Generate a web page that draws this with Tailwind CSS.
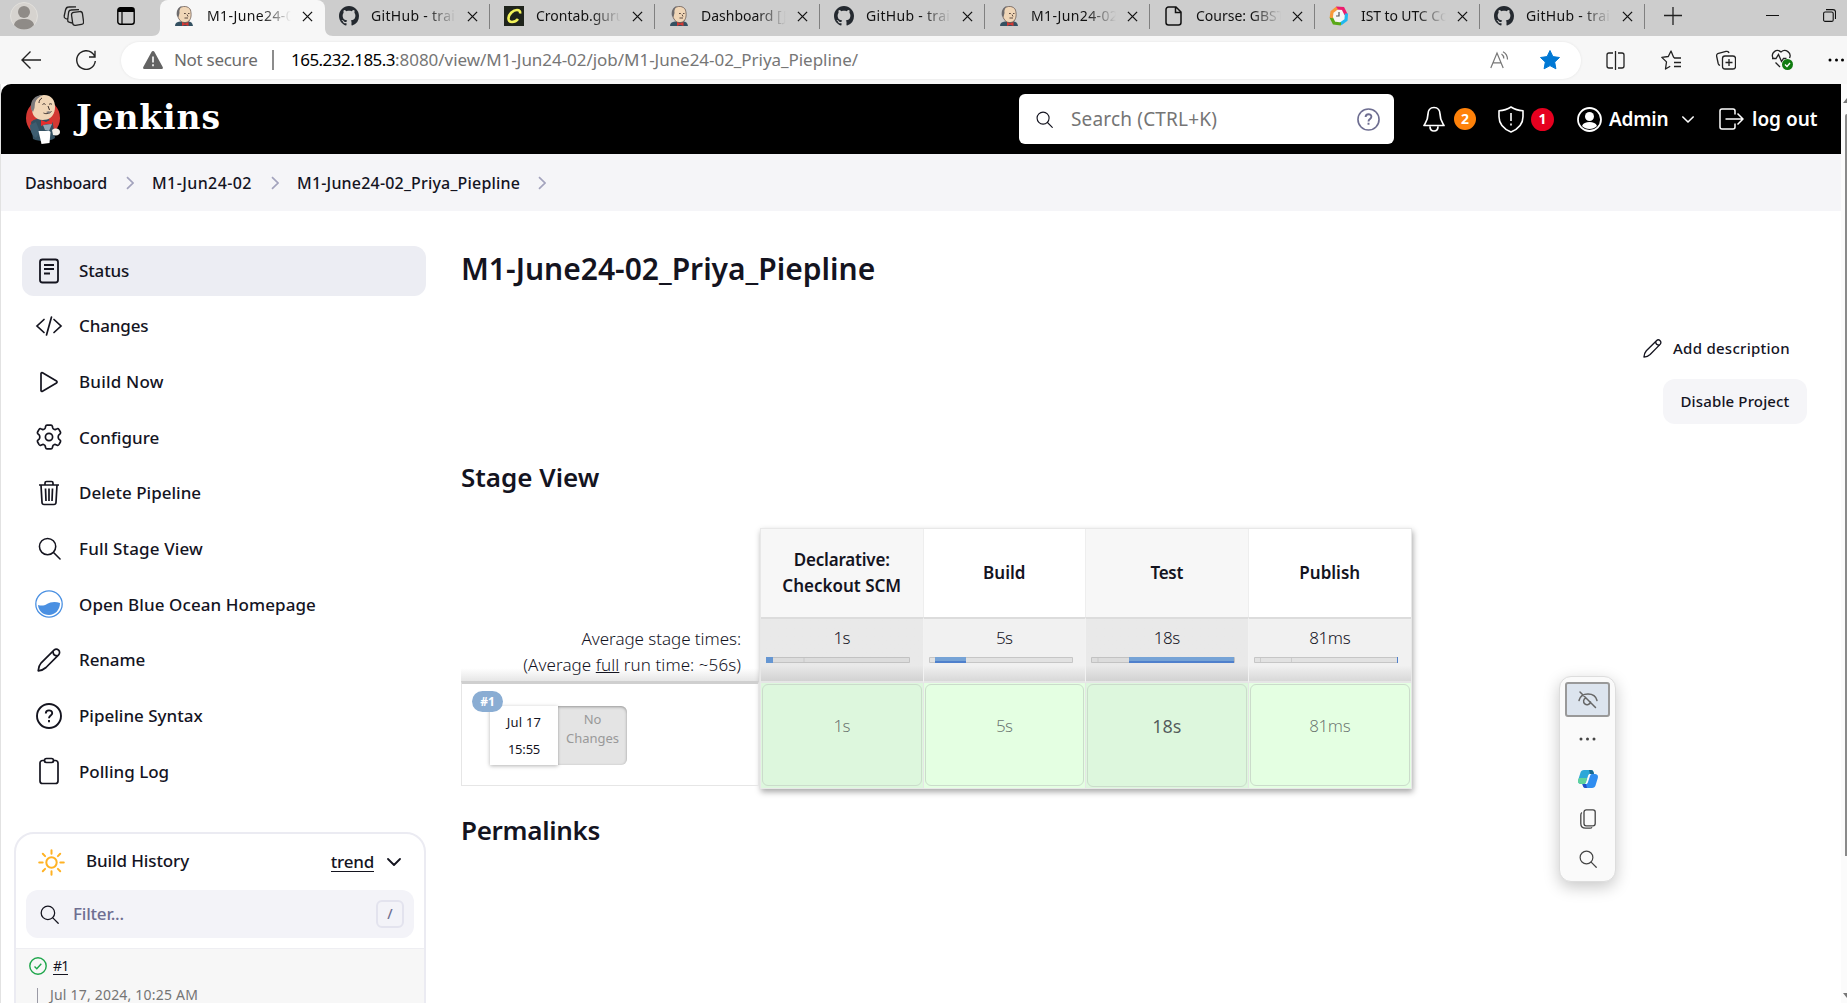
<!DOCTYPE html>
<html lang="en">
<head>
<meta charset="utf-8">
<title>M1-June24-02_Priya_Piepline [Jenkins]</title>
<script src="https://cdn.jsdelivr.net/npm/@tailwindcss/browser@4"></script>
</head>
<body class="w-[1847px] h-[1003px] overflow-hidden bg-white font-['Noto_Sans','Open_Sans',sans-serif] text-[#14141f]">

<svg class="hidden">
  <symbol id="butler" viewBox="0 0 20 20">
    <path d="M1 20c0-3 2-4 5-4.500l8-.2c3 .4 4.500 1.500 5 4.700z" fill="#335061"/>
    <path d="M5 13c-2-3-2-7 0-10C8-1 15 0 16.500 4c1 4 1 8-1.500 11-2 2-6 2-8 .5z" fill="#f0d6b7" stroke="#5b4a44" stroke-width=".7"/>
    <path d="M3 10c-1-4 .5-9 5-10-2 2-3 4-2.500 7l-1 4z" fill="#6d6b6d"/>
    <path d="M10 7.500h1.800M14 7.500h1.500M10.500 12h3.500M13 8.500l1 2" stroke="#4d3b33" stroke-width=".9" fill="none"/>
    <path d="M8 16l3 1.500 3.500-1.500v4l-3.500-1.200L8 20z" fill="#d33833"/>
  </symbol>
  <symbol id="github" viewBox="0 0 16 16"><path fill="#24292f" d="M8 0C3.580 0 0 3.580 0 8c0 3.540 2.290 6.530 5.470 7.590.4.070.550-.170.550-.380 0-.190-.010-.820-.010-1.490-2.010.370-2.530-.490-2.690-.940-.090-.230-.480-.940-.820-1.130-.280-.150-.680-.520-.010-.530.630-.010 1.080.580 1.230.820.720 1.210 1.870.870 2.330.660.070-.520.280-.870.510-1.070-1.780-.2-3.640-.890-3.640-3.950 0-.870.310-1.590.820-2.150-.080-.2-.360-1.020.080-2.120 0 0 .670-.210 2.200.820.640-.180 1.320-.270 2-.270s1.360.090 2 .270c1.530-1.040 2.200-.820 2.200-.820.440 1.100.160 1.920.080 2.120.510.560.820 1.270.820 2.150 0 3.070-1.870 3.750-3.650 3.950.290.250.540.730.540 1.480 0 1.070-.010 1.930-.010 2.200 0 .210.150.460.550.380A8.010 8.010 0 0 0 16 8c0-4.420-3.580-8-8-8z"/></symbol>
  <symbol id="close" viewBox="0 0 12 12"><path d="M1 1l10 10M11 1L1 11" stroke="#111" stroke-width="1.400" fill="none"/></symbol>
  <symbol id="search" viewBox="0 0 24 24"><g fill="none" stroke="currentColor" stroke-width="1.600" stroke-linecap="round"><circle cx="10" cy="10" r="8.500"/><path d="M16.200 16.200L23 23"/></g></symbol>
  <symbol id="pencil" viewBox="0 0 24 24"><g fill="none" stroke="currentColor" stroke-width="1.700" stroke-linejoin="round"><path d="M1.200 22.800c.3-3.500 1-5.800 3-8L17 2.200c1.300-1.300 3.300-1.300 4.600 0s1.300 3.300 0 4.600L9 19.500c-2.200 2-4.300 3-7.800 3.300z"/><path d="M16 3.200c0 3 1.700 4.700 4.700 4.700"/></g></symbol>
  <symbol id="chev" viewBox="0 0 8 14"><path d="M1 1.200L7 7l-6 5.800" fill="none" stroke="#a3a3bd" stroke-width="1.700"/></symbol>
  <symbol id="down" viewBox="0 0 14 8"><path d="M1 1l6 6 6-6" fill="none" stroke="currentColor" stroke-width="1.800" stroke-linecap="round" stroke-linejoin="round"/></symbol>
</svg>

<!-- Tab strip -->
<div class="flex h-9 bg-[#cdcdcd]">
  <div class="flex w-40 shrink-0 pl-[10px] pt-[2px]">
    <svg class="size-[28px]" viewBox="0 0 28 28"><circle cx="14" cy="14" r="13.500" fill="#d6d3cf" stroke="#e2e0dc"/><circle cx="14" cy="10" r="6" fill="#8f8b87"/><path d="M4 23c1-5 5-6 10-6s9 1 10 6c-5 6-15 6-20 0z" fill="#8f8b87"/></svg>
    <svg class="ml-[25px] mt-[4px] h-[20px] w-[21px]" viewBox="0 0 21 20" fill="none" stroke="#222" stroke-width="1.300"><rect x="9" y="6" width="11" height="13" rx="2.500" transform="rotate(-8 14 12)"/><path d="M9 17l-3-.8C5 16 4.600 15 4.700 14l.8-7c.2-2 1-3 2.500-3l8-.3M5 13.500l-2.500-1C1.300 12 1 11 1.200 10l1.300-6C3 2 4 1 5.500 1L13 .8"/></svg>
    <svg class="ml-[33px] mt-[5px] size-[18px]" viewBox="0 0 18 18"><rect x=".8" y=".8" width="16.400" height="16.400" rx="2.500" fill="none" stroke="#000" stroke-width="1.400"/><path d="M1 1h16v4H1z" fill="#000"/><path d="M5 5v12" stroke="#000" stroke-width="1.200"/></svg>
  </div>
  <div class="relative z-10 flex w-[165px] shrink-0 items-center rounded-t-lg bg-[#f7f7f7] pb-1 pl-[14px] text-sm">
    <svg class="absolute -left-2 bottom-0 size-2" viewBox="0 0 8 8"><path d="M8 0v8H0c5 0 8-3 8-8z" fill="#f7f7f7"/></svg>
    <svg class="absolute -right-2 bottom-0 size-2" viewBox="0 0 8 8"><path d="M0 0v8h8C3 8 0 5 0 0z" fill="#f7f7f7"/></svg>
    <svg class="size-5"><use href="#butler"/></svg>
    <div class="ml-[13px] w-[84px] overflow-hidden whitespace-nowrap bg-linear-to-r from-[#111] from-65% to-transparent bg-clip-text tracking-[0.4px] text-transparent">M1-June24-02</div>
    <svg class="ml-[11px] size-[11px]"><use href="#close"/></svg>
  </div>
  <div class="relative flex h-8 w-[165px] shrink-0 items-center pl-[14px] text-sm">
    <svg class="size-5"><use href="#github"/></svg>
    <div class="ml-[12px] w-[85px] overflow-hidden whitespace-nowrap bg-linear-to-r from-[#111] from-65% to-transparent bg-clip-text tracking-[0.3px] text-transparent">GitHub - train</div>
    <svg class="ml-[11px] size-[11px]"><use href="#close"/></svg>
    <div class="absolute right-0 top-1 h-[25px] w-px bg-[#808080]"></div>
  </div>
  <div class="relative flex h-8 w-[165px] shrink-0 items-center pl-[14px] text-sm">
    <svg class="size-5" viewBox="0 0 20 20"><path d="M0 0h20v20H0z" fill="#1f241c"/><path d="M16 7.500c.5-2-.5-3.500-3-3.500-4 0-8 4-8.500 8-.2 2.500 1 4 3.500 4 2.300 0 4.500-1 6-3" fill="none" stroke="#f2f35a" stroke-width="2.600"/></svg>
    <div class="ml-[12px] w-[85px] overflow-hidden whitespace-nowrap bg-linear-to-r from-[#111] from-65% to-transparent bg-clip-text text-transparent">Crontab.guru</div>
    <svg class="ml-[11px] size-[11px]"><use href="#close"/></svg>
    <div class="absolute right-0 top-1 h-[25px] w-px bg-[#808080]"></div>
  </div>
  <div class="relative flex h-8 w-[165px] shrink-0 items-center pl-[14px] text-sm">
    <svg class="size-5"><use href="#butler"/></svg>
    <div class="ml-[12px] w-[85px] overflow-hidden whitespace-nowrap bg-linear-to-r from-[#111] from-65% to-transparent bg-clip-text text-transparent">Dashboard [J</div>
    <svg class="ml-[11px] size-[11px]"><use href="#close"/></svg>
    <div class="absolute right-0 top-1 h-[25px] w-px bg-[#808080]"></div>
  </div>
  <div class="relative flex h-8 w-[165px] shrink-0 items-center pl-[14px] text-sm">
    <svg class="size-5"><use href="#github"/></svg>
    <div class="ml-[12px] w-[85px] overflow-hidden whitespace-nowrap bg-linear-to-r from-[#111] from-65% to-transparent bg-clip-text tracking-[0.3px] text-transparent">GitHub - train</div>
    <svg class="ml-[11px] size-[11px]"><use href="#close"/></svg>
    <div class="absolute right-0 top-1 h-[25px] w-px bg-[#808080]"></div>
  </div>
  <div class="relative flex h-8 w-[165px] shrink-0 items-center pl-[14px] text-sm">
    <svg class="size-5"><use href="#butler"/></svg>
    <div class="ml-[12px] w-[85px] overflow-hidden whitespace-nowrap bg-linear-to-r from-[#111] from-65% to-transparent bg-clip-text tracking-[0.4px] text-transparent">M1-Jun24-02</div>
    <svg class="ml-[11px] size-[11px]"><use href="#close"/></svg>
    <div class="absolute right-0 top-1 h-[25px] w-px bg-[#808080]"></div>
  </div>
  <div class="relative flex h-8 w-[165px] shrink-0 items-center pl-[14px] text-sm">
    <svg class="size-5" viewBox="0 0 20 20" fill="none" stroke="#111" stroke-width="1.500"><path d="M4.500 1H12l5 5v10.500a2.500 2.500 0 0 1-2.500 2.500h-10A2.500 2.500 0 0 1 2 16.500v-13A2.500 2.500 0 0 1 4.500 1zM11.500 1v5.500H17"/></svg>
    <div class="ml-[12px] w-[85px] overflow-hidden whitespace-nowrap bg-linear-to-r from-[#111] from-65% to-transparent bg-clip-text text-transparent">Course: GBST</div>
    <svg class="ml-[11px] size-[11px]"><use href="#close"/></svg>
    <div class="absolute right-0 top-1 h-[25px] w-px bg-[#808080]"></div>
  </div>
  <div class="relative flex h-8 w-[165px] shrink-0 items-center pl-[14px] text-sm">
    <svg class="size-5" viewBox="0 0 20 20"><circle cx="10" cy="10" r="8" fill="#f6f6f4"/><g fill="none" stroke-width="3.200"><path d="M7 2l7 .5 3 6" stroke="#ec1c6e"/><path d="M17.500 7.500L17 14l-5.500 4" stroke="#1fb8f0"/><path d="M12 18l-7-1-3-6" stroke="#5aa818"/><path d="M2.200 12L3 6l5-4" stroke="#f79a3a"/></g><path d="M10 6v4H7" fill="none" stroke="#555" stroke-width="1.200"/></svg>
    <div class="ml-[12px] w-[85px] overflow-hidden whitespace-nowrap bg-linear-to-r from-[#111] from-65% to-transparent bg-clip-text tracking-[-0.1px] text-transparent">IST to UTC Co</div>
    <svg class="ml-[11px] size-[11px]"><use href="#close"/></svg>
    <div class="absolute right-0 top-1 h-[25px] w-px bg-[#808080]"></div>
  </div>
  <div class="relative flex h-8 w-[165px] shrink-0 items-center pl-[14px] text-sm">
    <svg class="size-5"><use href="#github"/></svg>
    <div class="ml-[12px] w-[85px] overflow-hidden whitespace-nowrap bg-linear-to-r from-[#111] from-65% to-transparent bg-clip-text tracking-[0.3px] text-transparent">GitHub - train</div>
    <svg class="ml-[11px] size-[11px]"><use href="#close"/></svg>
    <div class="absolute right-0 top-1 h-[25px] w-px bg-[#808080]"></div>
  </div>
  <svg class="ml-[19px] mt-[7px] size-[18px] shrink-0" viewBox="0 0 18 18"><path d="M9 0v18M0 8.500h18" stroke="#222" stroke-width="1.300"/></svg>
  <svg class="ml-[84px] mt-[9px] size-[13px] shrink-0" viewBox="0 0 13 13"><path d="M0 6.500h13" stroke="#111"/></svg>
  <svg class="ml-[44px] mt-[9px] size-[13px] shrink-0" viewBox="0 0 13 13" fill="none" stroke="#111" stroke-width="1.100"><rect x=".6" y="3" width="9.600" height="9.400" rx="1.500"/><path d="M3 .6h7a2.500 2.500 0 0 1 2.500 2.500v7"/></svg>
</div>

<!-- Address bar -->
<div class="flex h-12 items-center bg-[#f7f7f7] pl-[21px] text-[17px]">
  <svg class="h-[18px] w-5 shrink-0" viewBox="0 0 20 18" fill="none" stroke="#222" stroke-width="1.400"><path d="M20 9H1M9.500.5L1 9l8.500 8.500"/></svg>
  <svg class="ml-[35px] size-5 shrink-0" viewBox="0 0 20 20" fill="none" stroke="#222" stroke-width="1.400"><path d="M19 7.500A9.300 9.300 0 1 0 19.300 11M19 .8V7h-6"/></svg>
  <div class="ml-[25px] flex h-[37px] w-[1460px] shrink-0 items-center whitespace-nowrap rounded-full bg-white pl-[22px] shadow-[0_0_3px_rgba(0,0,0,0.08)]">
    <svg class="h-[18px] w-5" viewBox="0 0 20 18"><path d="M10 0c.7 0 1.200.4 1.500 1l8.200 15c.6 1-.1 2-1.200 2h-17C.4 18-.3 17 .3 16L8.500 1c.3-.6.8-1 1.500-1z" fill="#636363"/><path d="M10 5.500v6M10 13.300v2" stroke="#fff" stroke-width="1.600"/></svg>
    <span class="ml-[11px] w-[84px] tracking-[-0.3px] text-[#6b6b6b]">Not secure</span>
    <div class="ml-[14px] h-5 w-[2px] bg-[#8c8c8c]"></div>
    <span class="ml-[17px] w-[104px] tracking-[-0.53px] text-black">165.232.185.3</span><span class="tracking-[-0.04px] text-[#767676]">:8080/view/M1-Jun24-02/job/M1-June24-02_Priya_Piepline/</span>
    <svg class="ml-auto h-[18px] w-5" viewBox="0 0 20 18" fill="none" stroke="#777" stroke-width="1.200"><path d="M.8 17L7 2l6.200 15M3 11.800h8M11.500 3c1.600 1 2.300 2.500 2.300 4.500M13 .7c3 1.600 4.500 4.300 4.500 7.800"/></svg>
    <svg class="ml-[30px] mr-[21px] size-5" viewBox="0 0 20 20"><path d="M10 .5l2.900 6.100 6.600.9-4.800 4.600 1.200 6.700L10 15.600l-5.900 3.200 1.200-6.700L.5 7.500l6.600-.9z" fill="#0078d4" stroke="#0078d4" stroke-linejoin="round"/></svg>
  </div>
  <svg class="ml-[25px] size-[19px] shrink-0" viewBox="0 0 19 19" fill="none" stroke="#222" stroke-width="1.300"><path d="M9.500 0v19M7 2H3a2 2 0 0 0-2 2v11a2 2 0 0 0 2 2h4M12 2h4a2 2 0 0 1 2 2v11a2 2 0 0 1-2 2h-4"/></svg>
  <svg class="ml-[36px] size-5 shrink-0" viewBox="0 0 20 20" fill="none" stroke="#222" stroke-width="1.300" stroke-linejoin="round"><path d="M20 8h-6.500l-1-1L10 1 7.300 6.500.8 7.400l4.700 4.500L4.500 19l4.700-2.800M13 12.500h7M13 16.500h7"/></svg>
  <svg class="ml-[35px] size-5 shrink-0" viewBox="0 0 20 20" fill="none" stroke="#222" stroke-width="1.300"><rect x="6.500" y="6" width="13" height="13" rx="2.500"/><path d="M13 9v7M9.500 12.500h7M4 15.500C3 15 2.500 14.500 2.200 13.500l-1.500-7C.3 5 1 3.800 2.500 3.400l7.500-2c1.500-.4 2.700.3 3 1.600"/></svg>
  <svg class="ml-[35px] size-[22px] shrink-0" viewBox="0 0 22 22" fill="none" stroke="#222" stroke-width="1.300"><path d="M9 18L4.500 13.500M2 9C-.5 4 5.500-1 10 3c4.500-4 11 1 8.500 6M1 9.500h4l2.500-4 3 7 2-3h3"/><circle cx="16.500" cy="15.500" r="5.500" fill="#107c10" stroke="none"/><path d="M14 15.500l2 2 3-3.500" stroke="#fff"/></svg>
  <svg class="ml-[35px] h-1 w-[17px] shrink-0" viewBox="0 0 17 4"><circle cx="2" cy="2" r="1.500"/><circle cx="8.500" cy="2" r="1.500"/><circle cx="14.500" cy="2" r="1.500"/></svg>
</div>

<!-- Page -->
<div class="flex h-[919px]">
<div class="w-[1841px] shrink-0 border-l border-[#e2e2e2]">
  <header class="flex h-[70px] items-center rounded-tl-[10px] bg-black pl-6 text-white">
    <svg class="h-[50px] w-[36px] shrink-0" viewBox="0 0 36 50"><ellipse cx="18" cy="24" rx="17" ry="18" fill="#d33833"/><path d="M6 28c3-3 8-4 12-4s9 2 10 6l2 14c-6 4-15 4-22 1z" fill="#335061"/><path d="M5 31l6-3 4 10-4 6c-4-2-6-7-6-13z" fill="#3d5d70"/><path d="M9 22C4 14 7 1 19 1c8 0 11 6 11 12s-3 11-8 12.500c-5 1-10 .5-13-3.500z" fill="#f0d6b7"/><path d="M6 15C5 6 10 1 18 1c-4 2-7 4-8 8l-.5 5L8 18z" fill="#7d7b7c"/><path d="M14 9c0-2 1-4 3-5M17.500 10.500c1-1 2.300-1 3 0M24 10.500c1-1 2-1 3 0M23 12l1.500 4M18.500 19c3 1.500 6 0 8-1.500" stroke="#3a2e2a" stroke-width="1" fill="none"/><path d="M21 18c2-1 3-1 5 0l-2 2z" fill="#7d7b7c"/><path d="M16 26l5 2 6-3v6l-5-1-6 2z" fill="#e52d2d"/><path d="M18 31l9-1-3 7-4-1z" fill="#8fa5b4"/><path d="M13.500 37h11l1 1-1 11-8 1z" fill="#fff"/><path d="M27 36c4-3 8-1 8 2s-3 4-7 3z" fill="#f3efe9"/></svg>
    <span class="ml-[15px] mt-[-4px] font-['DejaVu_Serif',serif] text-[33px] leading-none font-bold tracking-[0.9px]">Jenkins</span>
    <div class="ml-auto mr-[29px] flex h-[50px] w-[375px] items-center rounded-md bg-white pl-[17px] text-[19px] text-[#757575]">
      <svg class="size-[17px] text-[#14141f]"><use href="#search"/></svg>
      <span class="ml-[18px] tracking-[0.17px]">Search (CTRL+K)</span>
      <svg class="ml-auto mr-[14px] size-[23px]" viewBox="0 0 24 24" fill="none" stroke="#6e6e91" stroke-width="1.700"><circle cx="12" cy="12" r="11"/><path d="M9 9.500c0-4 6-4 6-.3 0 2.300-3 2.300-3 4.800M12 15.500v2" stroke-width="2"/></svg>
    </div>
    <div class="flex h-full items-center whitespace-nowrap text-[19px] font-semibold">
      <svg class="h-[26px] w-[22px]" viewBox="0 0 22 26" fill="none" stroke="#fff" stroke-width="1.700" stroke-linejoin="round"><path d="M11 1.500c-4 0-6 3-6 6.500 0 6-1.500 7.500-4 11.500h20c-2.500-4-4-5.500-4-11.500 0-3.500-2-6.500-6-6.500zM7 20.500c0 6 8 6 8 0"/></svg>
      <div class="ml-[9px] flex size-[22px] items-center justify-center rounded-full bg-[#ff820a] text-sm font-bold">2</div>
      <svg class="ml-[22px] h-[27px] w-[26px]" viewBox="0 0 26 27" fill="none" stroke="#fff" stroke-width="1.600" stroke-linejoin="round"><path d="M13 1c3.500 2.300 7.500 3.500 12 3.700v6C25 18 20 23 13 26 6 23 1 18 1 10.700v-6C5.500 4.500 9.500 3.300 13 1zM13 7v8M13 17.500v2"/></svg>
      <div class="ml-[7px] flex size-[23px] items-center justify-center rounded-full bg-[#e6001f] text-sm font-bold">1</div>
      <svg class="ml-[23px] size-[25px]" viewBox="0 0 25 25"><circle cx="12.500" cy="12.500" r="11.500" fill="none" stroke="#fff" stroke-width="1.800"/><circle cx="12.500" cy="9.500" r="4.500" fill="#fff"/><path d="M5 19c1-3 4-4 7.500-4s6.500 1 7.500 4c-4 4-11 4-15 0z" fill="#fff"/></svg>
      <span class="ml-[7px] w-[59px] tracking-[-0.2px]">Admin</span>
      <svg class="ml-[14px] h-[7px] w-[12px]"><use href="#down"/></svg>
      <svg class="ml-[25px] h-[22px] w-[25px]" viewBox="0 0 25 22" fill="none" stroke="#fff" stroke-width="1.500" stroke-linejoin="round"><path d="M16 6.500V3a2 2 0 0 0-2-2H3a2 2 0 0 0-2 2v16a2 2 0 0 0 2 2h11a2 2 0 0 0 2-2v-3.500M6.500 11H24M18.500 5.500L24 11l-5.500 5.500"/></svg>
      <span class="ml-[8px] mr-6 w-[65px]">log out</span>
    </div>
  </header>

  <nav class="flex h-[57px] items-center whitespace-nowrap bg-[#f5f5f8] pl-6 text-base font-medium">
    <span class="w-[82px] tracking-[-0.2px]">Dashboard</span>
    <svg class="ml-[19px] h-[14px] w-2"><use href="#chev"/></svg>
    <span class="ml-[18px] w-[100px] tracking-[0.4px]">M1-Jun24-02</span>
    <svg class="ml-[19px] h-[14px] w-2"><use href="#chev"/></svg>
    <span class="ml-[18px] w-[223px] tracking-[0.19px]">M1-June24-02_Priya_Piepline</span>
    <svg class="ml-[18px] h-[14px] w-2"><use href="#chev"/></svg>
  </nav>

  <div class="flex">
    <!-- Sidebar -->
    <aside class="ml-[13px] w-[412px] shrink-0 pt-[35px]">
      <div class="ml-2 flex h-[551px] w-[404px] flex-col justify-between text-[17px] font-medium">
        <div class="flex h-[50px] items-center gap-[15px] rounded-xl bg-[#ecedf3] pb-px pl-[12px]">
          <svg class="size-[30px]" viewBox="0 0 30 30" fill="none" stroke="currentColor" stroke-width="1.800"><rect x="6" y="3.500" width="18" height="23" rx="2.500"/><path d="M10 9h10M10 13h10M10 17.500h6"/></svg><span class="tracking-[-0.15px]">Status</span></div>
        <div class="flex h-[50px] items-center gap-[15px] pb-px pl-[12px]">
          <svg class="size-[30px]" viewBox="0 0 30 30" fill="none" stroke="currentColor" stroke-width="1.700" stroke-linecap="round"><path d="M10 8.500L3 15l7 6.500M20 8.500l7 6.500-7 6.500M17.500 6l-5 18"/></svg><span class="tracking-[-0.15px]">Changes</span></div>
        <div class="flex h-[50px] items-center gap-[15px] pb-px pl-[12px]">
          <svg class="size-[30px]" viewBox="0 0 30 30" fill="none" stroke="currentColor" stroke-width="1.700" stroke-linejoin="round"><path d="M7 6.500v17c0 .8.800 1.200 1.500.8l14-8.400c.7-.4.7-1.400 0-1.800l-14-8.400C7.800 5.300 7 5.700 7 6.500z"/></svg><span class="tracking-[0.2px]">Build Now</span></div>
        <div class="flex h-[50px] items-center gap-[15px] pb-px pl-[12px]">
          <svg class="size-[30px]" viewBox="0 0 30 30" fill="none" stroke="currentColor" stroke-width="1.700" stroke-linejoin="round"><circle cx="15" cy="15" r="3.600"/><path d="M13 3.200h4c.8 0 1.200.4 1.400 1.200l.4 1.600c.2.700.5 1 1.200 1.300.6.300 1 .4 1.600.1l1.600-.6c.7-.3 1.300 0 1.700.6l1.500 2.600c.4.700.3 1.300-.3 1.800l-1.200 1.100c-.5.500-.7 1-.7 2.100s.2 1.600.7 2.100l1.200 1.100c.6.500.7 1.100.3 1.800l-1.500 2.600c-.4.600-1 .9-1.700.6l-1.600-.6c-.6-.3-1-.2-1.600.1-.7.3-1 .6-1.200 1.300l-.4 1.600c-.2.800-.6 1.200-1.400 1.200h-4c-.8 0-1.200-.4-1.400-1.200l-.4-1.600c-.2-.7-.5-1-1.200-1.300-.6-.3-1-.4-1.600-.1l-1.600.6c-.7.3-1.300 0-1.700-.6L3.600 20c-.4-.7-.3-1.300.3-1.800l1.200-1.100c.5-.5.7-1 .7-2.100s-.2-1.600-.7-2.100l-1.200-1.100c-.6-.5-.7-1.100-.3-1.800l1.500-2.600c.4-.6 1-.9 1.700-.6l1.600.6c.6.300 1 .2 1.600-.1.7-.3 1-.6 1.200-1.300l.4-1.600c.2-.8.6-1.200 1.400-1.200z"/></svg><span>Configure</span></div>
        <div class="flex h-[50px] items-center gap-[15px] pb-px pl-[12px]">
          <svg class="size-[30px]" viewBox="0 0 30 30" fill="none" stroke="currentColor" stroke-width="1.700"><path d="M5 7h20M11 7V5c0-1 .5-1.500 1.500-1.500h5c1 0 1.500.5 1.500 1.500v2M7 7l1 17.500c.1 1 .9 2 2 2h10c1.100 0 1.900-1 2-2L23 7M11.500 10.500l.5 12.500M15 10.500V23M18.500 10.500L18 23"/></svg><span>Delete Pipeline</span></div>
        <div class="flex h-[50px] items-center gap-[15px] pb-px pl-[12px]">
          <span class="flex size-[30px] items-center justify-center"><svg class="size-[23px]"><use href="#search"/></svg></span><span class="tracking-[0.15px]">Full Stage View</span></div>
        <div class="flex h-[50px] items-center gap-[15px] pb-px pl-[12px]">
          <svg class="size-[30px]" viewBox="0 0 30 30"><circle cx="15" cy="15" r="13.200" fill="none" stroke="#4a90e2" stroke-width="1.300"/><path d="M4 16c3 .8 6 1 9-1s8-3 13-1c0 7-5 12-11 12S4.500 22 4 16z" fill="#4a90e2"/></svg><span class="tracking-[0.08px]">Open Blue Ocean Homepage</span></div>
        <div class="flex h-[50px] items-center gap-[15px] pb-px pl-[12px]">
          <span class="flex size-[30px] items-center justify-center"><svg class="size-[24px]"><use href="#pencil"/></svg></span><span class="tracking-[-0.1px]">Rename</span></div>
        <div class="flex h-[50px] items-center gap-[15px] pb-px pl-[12px]">
          <svg class="size-[30px]" viewBox="0 0 30 30" fill="none" stroke="currentColor" stroke-width="1.900"><circle cx="15" cy="15" r="12"/><path d="M11.800 12.500c0-4.200 6.400-4 6.400-.3 0 2.300-3.200 2.500-3.200 5M15 19v2.200"/></svg><span>Pipeline Syntax</span></div>
        <div class="flex h-[50px] items-center gap-[15px] pb-px pl-[12px]">
          <svg class="size-[30px]" viewBox="0 0 30 30" fill="none" stroke="currentColor" stroke-width="1.700"><path d="M11 4.500H8.500a2.500 2.500 0 0 0-2.500 2.500v18a2.500 2.500 0 0 0 2.500 2.500h13a2.500 2.500 0 0 0 2.500-2.500V7a2.500 2.500 0 0 0-2.500-2.500H19"/><rect x="10.500" y="2.500" width="9" height="4" rx="2"/></svg><span>Polling Log</span></div>
      </div>

      <div class="mt-[35px] h-[200px] rounded-t-[20px] border-2 border-[#ebebf2] text-[17px] font-medium">
        <div class="flex h-[56px] items-center pl-[22px]">
          <svg class="size-[27px]" viewBox="0 0 27 27" fill="none" stroke="#ffb224" stroke-width="2" stroke-linecap="round"><circle cx="13.500" cy="13.500" r="5.200"/><path d="M13.500 1.200v3.500M13.500 22.300v3.500M1.200 13.500h3.500M22.300 13.500h3.500M4.800 4.800l2.300 2.300M19.900 19.900l2.300 2.300M22.200 4.800l-2.300 2.300M7.100 19.900l-2.300 2.300"/></svg>
          <span class="ml-[21px] pb-[3px] tracking-[-0.12px]">Build History</span>
          <span class="mb-px ml-auto border-b border-[#14141f] leading-[19px] tracking-[-0.2px]">trend</span>
          <svg class="ml-[13px] mr-[23px] h-[8px] w-[14px]"><use href="#down"/></svg>
        </div>
        <div class="mx-[10px] flex h-[48px] items-center rounded-xl bg-[#f3f3f8] pl-[14px] text-[#6e6e91]">
          <svg class="size-[19px] text-[#14141f]"><use href="#search"/></svg>
          <span class="ml-[14px] tracking-[-0.2px]">Filter...</span>
          <span class="ml-auto mr-[10px] flex size-7 items-center justify-center rounded-md border-2 border-[#e3e3ee] text-sm">/</span>
        </div>
        <div class="mt-[10px] h-[60px] border-t border-[#eeeef2] bg-[#f7f7f7] pl-[13px] pt-[8px] font-normal">
          <div class="flex items-center">
            <svg class="size-[18px]" viewBox="0 0 18 18" fill="none" stroke="#1ea64b" stroke-width="1.400"><circle cx="9" cy="9" r="8.200"/><path d="M5.500 9.500l2.300 2.300 4.500-5"/></svg>
            <span class="ml-[6px] border-b border-[#14141f] text-[14px] leading-[17px] tracking-[-0.8px]">#1</span>
          </div>
          <div class="ml-[8px] mt-[13px] border-l border-[#9a9aa5] pl-[12px] text-[14px] leading-[13px] tracking-[0.2px] text-[#757575]">Jul 17, 2024, 10:25 AM<div class="h-4"></div></div>
        </div>
      </div>
    </aside>

    <!-- Main -->
    <main class="ml-[35px] w-[1346px]">
      <h1 class="mt-[38px] text-[30px] leading-10 font-semibold">M1-June24-02_Priya_Piepline</h1>
      <div class="mt-[48px] flex h-[24px] items-center justify-end pb-px pr-[17px] text-[15px] font-medium">
        <svg class="size-[19px]"><use href="#pencil"/></svg><span class="ml-[11px] tracking-[0.27px]">Add description</span>
      </div>
      <div class="mt-[18px] ml-auto flex h-[45px] w-[144px] items-center justify-center rounded-xl bg-[#f5f5f8] text-[15px] font-medium tracking-[0.14px]">Disable Project</div>
      <h2 class="mt-[33px] text-[26px] leading-10 font-semibold">Stage View</h2>

      <div class="mt-[31px] flex h-[261px] text-[17px]">
        <div class="mr-px flex w-[298px] flex-col pt-[89px]">
          <div class="h-[64px] bg-linear-to-b from-white from-80% to-[#e6e6e6] pr-[18px] pt-[9px] text-right leading-[26px] font-light">
            <div class="tracking-[-0.05px]">Average stage times:</div>
            <div class="tracking-[0.07px]">(Average <u>full</u> run time: ~56s)</div>
          </div>
          <div class="relative h-[105px] border border-t-[3px] border-[#e6e6e6] border-t-[#cfcfcf]">
            <div class="absolute left-[10px] top-[7px] z-10 flex h-[21px] w-[31px] items-center justify-center rounded-full bg-[#8aadd3] text-xs font-bold text-white">#1</div>
            <div class="ml-[28px] mt-[22px] flex h-[59px] text-[13px]">
              <div class="flex w-[68px] flex-col items-center justify-between bg-white py-[6px] leading-[20px] shadow-[0_1px_4px_rgba(0,0,0,0.3)]"><span class="tracking-[0.2px]">Jul 17</span><span class="tracking-[-0.2px]">15:55</span></div>
              <div class="w-[69px] rounded-r-md bg-[#e4e4e4] pt-[4px] text-center leading-[19px] text-[#999] shadow-[inset_0_1px_3px_rgba(0,0,0,0.35)]">No<br>Changes</div>
            </div>
          </div>
        </div>
        <div class="grid w-[652px] grid-cols-4 grid-rows-[88px_66px_1fr] border border-[#e8e8e8] text-center shadow-[1px_3px_6px_rgba(0,0,0,0.35)]">
          <div class="flex items-center justify-center border-r border-[#eee] bg-[#f7f7f7] leading-[26px] font-semibold"><div><span class="tracking-[-0.2px]">Declarative:</span><br>Checkout SCM</div></div>
          <div class="flex items-center justify-center border-r border-[#eee] font-semibold">Build</div>
          <div class="flex items-center justify-center border-r border-[#eee] bg-[#f7f7f7] font-semibold tracking-[-0.3px]">Test</div>
          <div class="flex items-center justify-center font-semibold">Publish</div>

          <div class="border-t-2 border-b-2 border-r border-t-[#dcdcdc] border-b-[#e6e6e6] border-r-[#f2f2f2] bg-linear-to-b from-[#e9e9e9] from-75% to-[#d2d2d2] px-[5px] pt-[7px] font-light"><div class="leading-6 tracking-[-0.5px]">1s</div>
            <svg class="mt-[7px] h-[6px] w-[144px]" viewBox="0 0 144 6"><path d="M.5.5h143v5H.5z" fill="#dcdcdc" stroke="#c2c2c2"/><path d="M38 1v4" stroke="#c8c8c8"/><path d="M0 0h7v6H0z" fill="#6596d2"/></svg></div>
          <div class="border-t-2 border-b-2 border-r border-t-[#dcdcdc] border-b-[#e6e6e6] border-r-[#f2f2f2] bg-linear-to-b from-[#f1f1f1] from-75% to-[#d8d8d8] px-[5px] pt-[7px] font-light"><div class="leading-6 tracking-[-0.5px]">5s</div>
            <svg class="mt-[7px] h-[6px] w-[144px]" viewBox="0 0 144 6"><path d="M.5.5h143v5H.5z" fill="#e2e2e2" stroke="#c6c6c6"/><path d="M6 0h31v4H6z" fill="#76a3d6"/><path d="M6 4h31v2H6z" fill="#4f80cc"/></svg></div>
          <div class="border-t-2 border-b-2 border-r border-t-[#dcdcdc] border-b-[#e6e6e6] border-r-[#f2f2f2] bg-linear-to-b from-[#e9e9e9] from-75% to-[#d2d2d2] px-[5px] pt-[7px] font-light"><div class="leading-6 tracking-[-0.5px]">18s</div>
            <svg class="mt-[7px] h-[6px] w-[144px]" viewBox="0 0 144 6"><path d="M.5.5h143v5H.5z" fill="#dcdcdc" stroke="#c2c2c2"/><path d="M7 1v4" stroke="#c8c8c8"/><path d="M38 0h105v4H38z" fill="#76a3d6"/><path d="M38 4h105v2H38z" fill="#4f80cc"/></svg></div>
          <div class="border-t-2 border-b-2 border-t-[#dcdcdc] border-b-[#e6e6e6] bg-linear-to-b from-[#f1f1f1] from-75% to-[#d8d8d8] px-[5px] pt-[7px] font-light"><div class="leading-6 tracking-[-0.4px]">81ms</div>
            <svg class="mt-[7px] h-[6px] w-[144px]" viewBox="0 0 144 6"><path d="M.5.5h143v5H.5z" fill="#e2e2e2" stroke="#c6c6c6"/><path d="M6.500 1v4M37.500 1v4" stroke="#ccc"/><path d="M143 0h1v6h-1z" fill="#4f80cc"/></svg></div>

          <div class="border-r border-[#e6e6e6] bg-[#ddf7dd] px-px pb-[2px] pt-px font-light tracking-[-0.5px] text-[#14141f]/60"><div class="flex h-full items-center justify-center rounded-md border border-[#cbdccb] pb-[18px]">1s</div></div>
          <div class="border-r border-[#e6e6e6] bg-[#e4ffe2] px-px pb-[2px] pt-px font-light tracking-[-0.5px] text-[#14141f]/60"><div class="flex h-full items-center justify-center rounded-md border border-[#cbdccb] pb-[18px]">5s</div></div>
          <div class="border-r border-[#e6e6e6] bg-[#ddf7dd] p-px text-[18px] text-[#14141f]/70"><div class="flex h-full items-center justify-center rounded-md border border-[#cbdccb] pb-[18px]">18s</div></div>
          <div class="bg-[#e4ffe2] px-px pb-[2px] pt-px font-light tracking-[-0.4px] text-[#14141f]/60"><div class="flex h-full items-center justify-center rounded-md border border-[#cbdccb] pb-[18px]">81ms</div></div>
        </div>
      </div>

      <h2 class="mt-[21px] text-[26px] leading-10 font-semibold tracking-[-0.3px]">Permalinks</h2>
    </main>
  </div>
</div>
<!-- Scrollbar, cut off by the window edge -->
<div class="flex w-[6px] flex-col items-end bg-[#fbfbfb]">
  <svg class="mt-[14px] h-[5px] w-[4px]" viewBox="0 0 4 5"><path d="M0 5l4-5v5z" fill="#777"/></svg>
  <div class="mt-[11px] h-[742px] w-[2px] rounded-tl bg-[#8a8a8a]"></div>
  <svg class="mt-[137px] h-[5px] w-[4px]" viewBox="0 0 4 5"><path d="M0 0l4 5V0z" fill="#777"/></svg>
</div>
</div>

<!-- Floating mini menu -->
<div class="absolute left-[1559px] top-[676px] flex h-[206px] w-[57px] flex-col items-center rounded-xl border border-[#ddd] bg-[#fafafa] pt-[5px] text-[#444] shadow-[0_5px_16px_rgba(0,0,0,0.22)]">
  <div class="flex h-[35px] w-[45px] items-center justify-center rounded-[3px] border-2 border-[#999] bg-[#dce4ee]">
    <svg class="size-5" viewBox="0 0 20 20" fill="none" stroke="#666" stroke-width="1.500" stroke-linecap="round"><path d="M1 10.500C2 6.500 5.500 4 10 4s8 2.500 9 6.500M2 2l15.500 15.500M12.500 12a3.500 3.500 0 1 1-4.700-4"/></svg>
  </div>
  <svg class="mt-[20px] h-1 w-[17px]" viewBox="0 0 17 4" fill="#444"><circle cx="2" cy="2" r="1.500"/><circle cx="8.500" cy="2" r="1.500"/><circle cx="15" cy="2" r="1.500"/></svg>
  <svg class="mt-[29px] h-[18px] w-5" viewBox="0 0 20 18"><path d="M6 0h7c1.500 0 2 .8 2.500 2l.5 2h-4c-1 0-1.500.5-2 2l-2 6c-.5 1.500-1 2-2.500 2H3c-2 0-3.500-1.500-2.800-4L2.500 2.500C3 1 4 0 6 0z" fill="#2ba7d8"/><path d="M1 8h8l-1 4c-.5 1.500-1 2-2.500 2H3C1 14-.5 12.500.2 10z" fill="#5fd39b"/><path d="M14 18H7.500c-1.500 0-2-.8-2.500-2l-.6-2H8c1 0 1.500-.5 2-2l2-6c.5-1.500 1-2 2.500-2H17c2 0 3.500 1.500 2.800 4l-2.300 7.500c-.5 1.500-1.500 2.500-3.500 2.500z" fill="#2f8df0"/><path d="M11 0h2c1.500 0 2 .8 2.500 2l.5 2h-4z" fill="#17688f"/><path d="M4.400 14H8l1 4H7.500c-1.500 0-2-.8-2.500-2z" fill="#2250c8"/></svg>
  <svg class="mt-[21px] h-5 w-4" viewBox="0 0 16 20" fill="none" stroke="#444" stroke-width="1.300"><rect x="4" y=".8" width="11.200" height="16" rx="2.200"/><path d="M2 3.500C1 4 .8 5 .8 6v8.500c0 3 1.700 4.700 4.700 4.700H10c1 0 1.700-.4 2-1"/></svg>
  <svg class="mt-[21px] size-[18px]"><use href="#search"/></svg>
</div>
</body>
</html>
